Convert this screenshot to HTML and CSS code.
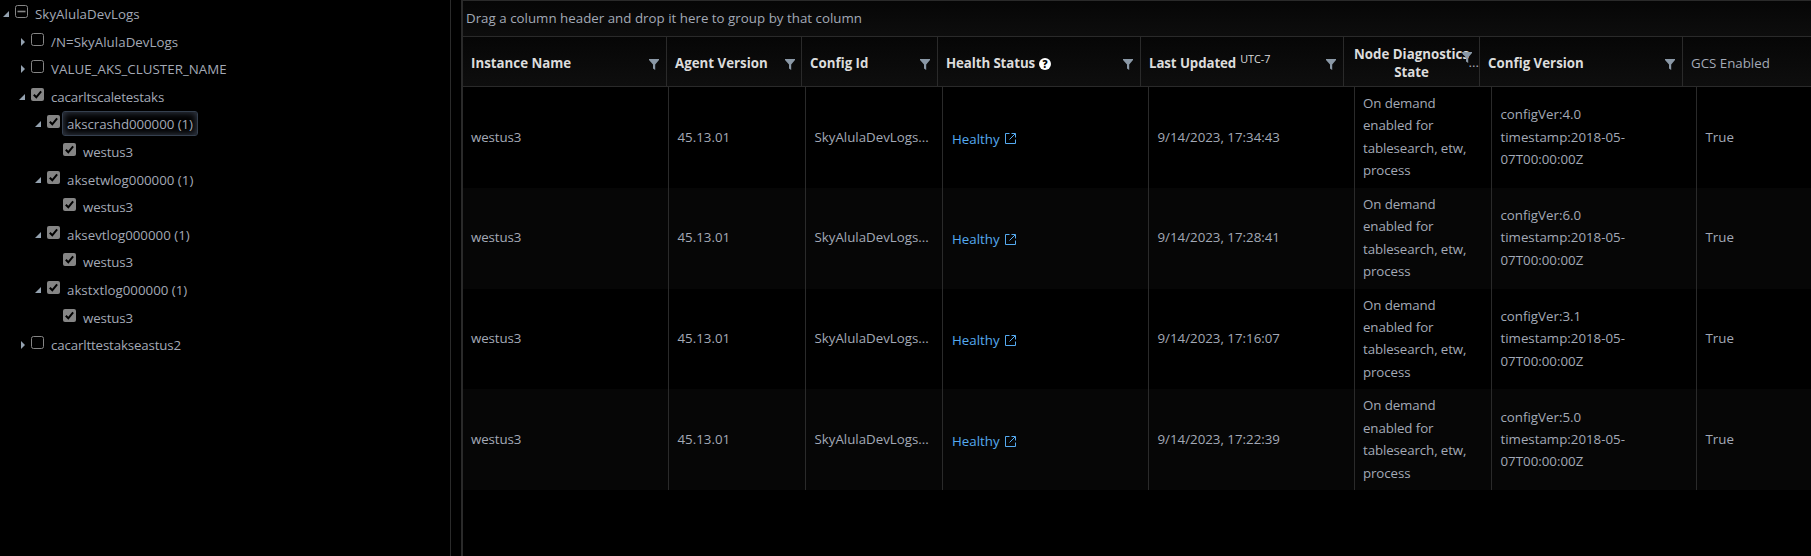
FILE: index.html
```html
<!DOCTYPE html>
<html lang="en">
<head>
<meta charset="utf-8">
<title>SkyAlulaDevLogs</title>
<link rel="stylesheet" href="styles.css">
</head>
<body>
<svg class="defs" width="0" height="0" aria-hidden="true">
  <symbol id="open" viewBox="0 0 8 8"><path d="M7 1v6H1z" fill="#94a2b0"/></symbol>
  <symbol id="closed" viewBox="0 0 8 8"><path d="M3 0l4 4-4 4z" fill="#94a2b0"/></symbol>
  <symbol id="off" viewBox="0 0 13 13"><rect x=".5" y=".5" width="12" height="12" rx="2" fill="#000" stroke="#858585"/></symbol>
  <symbol id="mixed" viewBox="0 0 13 13"><rect x=".5" y=".5" width="12" height="12" rx="2" fill="#000" stroke="#858585"/><path d="M2.5 6.5h8" stroke="#858585" stroke-width="1.6"/></symbol>
  <symbol id="on" viewBox="0 0 13 13"><rect width="13" height="13" rx="2" fill="#858585"/><path d="M2.8 6.8l2.5 2.5 4.8-6" fill="none" stroke="#000" stroke-width="2"/></symbol>
  <symbol id="filter" viewBox="0 0 10 12"><path d="M0 0h10v1L6.2 5.5V11L4 9.5v-4L0 1z" fill="#8a98a6"/></symbol>
  <symbol id="ext" viewBox="0 0 11 11"><path d="M4.5.5h-4v10h10v-4M6.5.5h4v4M10.2.8L4.5 6.5" fill="none" stroke="#55aaf0" stroke-width="1"/></symbol>
</svg>
<div class="app">
  <nav class="tree">
    <div class="node l0"><svg class="arrow"><use href="#open"/></svg><svg class="box"><use href="#mixed"/></svg><span class="label wide">SkyAlulaDevLogs</span></div>
    <div class="node l1"><svg class="arrow"><use href="#closed"/></svg><svg class="box"><use href="#off"/></svg><span class="label wide">/N=SkyAlulaDevLogs</span></div>
    <div class="node l1"><svg class="arrow"><use href="#closed"/></svg><svg class="box"><use href="#off"/></svg><span class="label wide">VALUE_AKS_CLUSTER_NAME</span></div>
    <div class="node l1"><svg class="arrow"><use href="#open"/></svg><svg class="box"><use href="#on"/></svg><span class="label tight">cacarltscaletestaks</span></div>
    <div class="node l2"><svg class="arrow"><use href="#open"/></svg><svg class="box"><use href="#on"/></svg><span class="label focused">akscrashd000000 (1)</span></div>
    <div class="node l3"><svg class="arrow"></svg><svg class="box"><use href="#on"/></svg><span class="label tight">westus3</span></div>
    <div class="node l2"><svg class="arrow"><use href="#open"/></svg><svg class="box"><use href="#on"/></svg><span class="label">aksetwlog000000 (1)</span></div>
    <div class="node l3"><svg class="arrow"></svg><svg class="box"><use href="#on"/></svg><span class="label tight">westus3</span></div>
    <div class="node l2"><svg class="arrow"><use href="#open"/></svg><svg class="box"><use href="#on"/></svg><span class="label">aksevtlog000000 (1)</span></div>
    <div class="node l3"><svg class="arrow"></svg><svg class="box"><use href="#on"/></svg><span class="label tight">westus3</span></div>
    <div class="node l2"><svg class="arrow"><use href="#open"/></svg><svg class="box"><use href="#on"/></svg><span class="label">akstxtlog000000 (1)</span></div>
    <div class="node l3"><svg class="arrow"></svg><svg class="box"><use href="#on"/></svg><span class="label tight">westus3</span></div>
    <div class="node l1"><svg class="arrow"><use href="#closed"/></svg><svg class="box"><use href="#off"/></svg><span class="label tight">cacarlttestakseastus2</span></div>
  </nav>
  <main class="grid">
    <div class="group">Drag a column header and drop it here to group by that column</div>
    <div class="head">
      <div class="th"><span class="t">Instance Name</span><svg class="filter"><use href="#filter"/></svg></div>
      <div class="th"><span class="t">Agent Version</span><svg class="filter near"><use href="#filter"/></svg></div>
      <div class="th"><span class="t">Config Id</span><svg class="filter"><use href="#filter"/></svg></div>
      <div class="th"><span class="t narrow">Health Status</span><span class="help">?</span><svg class="filter"><use href="#filter"/></svg></div>
      <div class="th"><span class="t narrow">Last Updated</span><span class="utc">UTC-7</span><svg class="filter"><use href="#filter"/></svg></div>
      <div class="th diag"><span class="t">Node Diagnostics<br>State</span><svg class="filter over"><use href="#filter"/></svg><span class="dots">...</span></div>
      <div class="th"><span class="t">Config Version</span><svg class="filter"><use href="#filter"/></svg></div>
      <div class="th plain"><span>GCS Enabled</span></div>
    </div>
    <div class="row"><div>westus3</div><div>45.13.01</div><div>SkyAlulaDevLogs...</div><div class="link">Healthy<svg><use href="#ext"/></svg></div><div>9/14/2023, 17:34:43</div><div class="state">On demand<br>enabled for<br>tablesearch, etw,<br>process</div><div>configVer:4.0<br>timestamp:2018-05-<br>07T00:00:00Z</div><div>True</div></div>
    <div class="row"><div>westus3</div><div>45.13.01</div><div>SkyAlulaDevLogs...</div><div class="link">Healthy<svg><use href="#ext"/></svg></div><div>9/14/2023, 17:28:41</div><div class="state">On demand<br>enabled for<br>tablesearch, etw,<br>process</div><div>configVer:6.0<br>timestamp:2018-05-<br>07T00:00:00Z</div><div>True</div></div>
    <div class="row"><div>westus3</div><div>45.13.01</div><div>SkyAlulaDevLogs...</div><div class="link">Healthy<svg><use href="#ext"/></svg></div><div>9/14/2023, 17:16:07</div><div class="state">On demand<br>enabled for<br>tablesearch, etw,<br>process</div><div>configVer:3.1<br>timestamp:2018-05-<br>07T00:00:00Z</div><div>True</div></div>
    <div class="row"><div>westus3</div><div>45.13.01</div><div>SkyAlulaDevLogs...</div><div class="link">Healthy<svg><use href="#ext"/></svg></div><div>9/14/2023, 17:22:39</div><div class="state">On demand<br>enabled for<br>tablesearch, etw,<br>process</div><div>configVer:5.0<br>timestamp:2018-05-<br>07T00:00:00Z</div><div>True</div></div>
  </main>
</div>
</body>
</html>
```
FILE: styles.css
```css
* { box-sizing: border-box; }
body {
  margin: 0;
  background: #000;
  color: #a3a9b6;
  font: 13.3px/22.4px "Open Sans", "Noto Sans", sans-serif;
  overflow: hidden;
}
.defs { display: none; }
.app { display: flex; height: 556px; }
.tree { width: 451px; flex: none; border-right: 1px solid #2a2a2a; }
.node { display: flex; align-items: flex-start; height: 27.6px; padding-top: 5px; }
.l0 { padding-left: 2px; }
.l1 { padding-left: 18px; }
.l2 { padding-left: 34px; }
.l3 { padding-left: 50px; }
.arrow { width: 8px; height: 8px; margin: 5px 5px 0 0; flex: none; }
.box { width: 13px; height: 13px; margin-right: 2px; flex: none; }
.label { height: 25px; line-height: 24px; margin-top: -4px; padding: 0 4px; border: 1px solid transparent; border-radius: 3px; white-space: nowrap; }
.wide { letter-spacing: .05px; }
.tight { letter-spacing: -.15px; }
.focused { border-color: #35404f; box-shadow: inset 0 0 7px 1px #343b48; letter-spacing: -.06px; }
.grid { flex: 1; min-width: 0; margin-left: 10px; border-left: 2px solid #2a2a2a; border-top: 1px solid #2a2a2a; overflow: hidden; }
.group { height: 36px; padding: 0 3px; line-height: 35px; letter-spacing: .02px; background: linear-gradient(#060606, #0d0d0d); border-bottom: 1px solid #2a2a2a; }
.head { display: grid; grid-template-columns: 204px 135px 136px 203px 203px 136px 203px 1fr; height: 50px; background: linear-gradient(#060606, #0e0e0e); border-bottom: 1px solid #2a2a2a; }
.th { position: relative; display: flex; align-items: center; padding: 3px 7px 0 8px; border-right: 1px solid #2a2a2a; white-space: nowrap; }
.t { font-weight: 700; color: #dcdcdc; line-height: 18px; }
.narrow { letter-spacing: -.1px; }
.filter { width: 10px; height: 12px; margin: 3px 0 0 auto; flex: none; }
.near { margin-right: -1px; }
.help { width: 12px; height: 12px; margin: 2px 0 0 4px; border-radius: 50%; background: #fff; color: #000; font-size: 10px; font-weight: 800; line-height: 12px; text-align: center; }
.utc { align-self: flex-start; margin: 11px 0 0 4px; font-size: 10.8px; line-height: 16px; color: #dcdcdc; }
.diag { padding: 2px 0 0 10px; }
.diag .t { text-align: center; }
.over { position: absolute; right: 7px; top: 15px; margin: 0; }
.dots { position: absolute; right: 0; top: 14px; }
.plain { border-right: 0; }
.row { display: grid; grid-template-columns: 206px 137px 137px 206px 206px 137px 205px 1fr; height: 100.75px; }
.row:nth-child(even) { background: #060606; }
.row:nth-child(odd) { background: #000; }
.row > div { display: flex; align-items: center; padding: 0 0 1px 8.5px; border-right: 1px solid #2a2a2a; white-space: nowrap; }
.row > div:first-child { padding-left: 8px; letter-spacing: -.1px; }
.row > div:last-child { border-right: 0; }
.row > .state { letter-spacing: -.1px; padding-left: 8px; }
.row > .link { color: #55aaf0; padding: 3px 0 0 9px; }
.link svg { width: 11px; height: 11px; margin-left: 5px; }
```
